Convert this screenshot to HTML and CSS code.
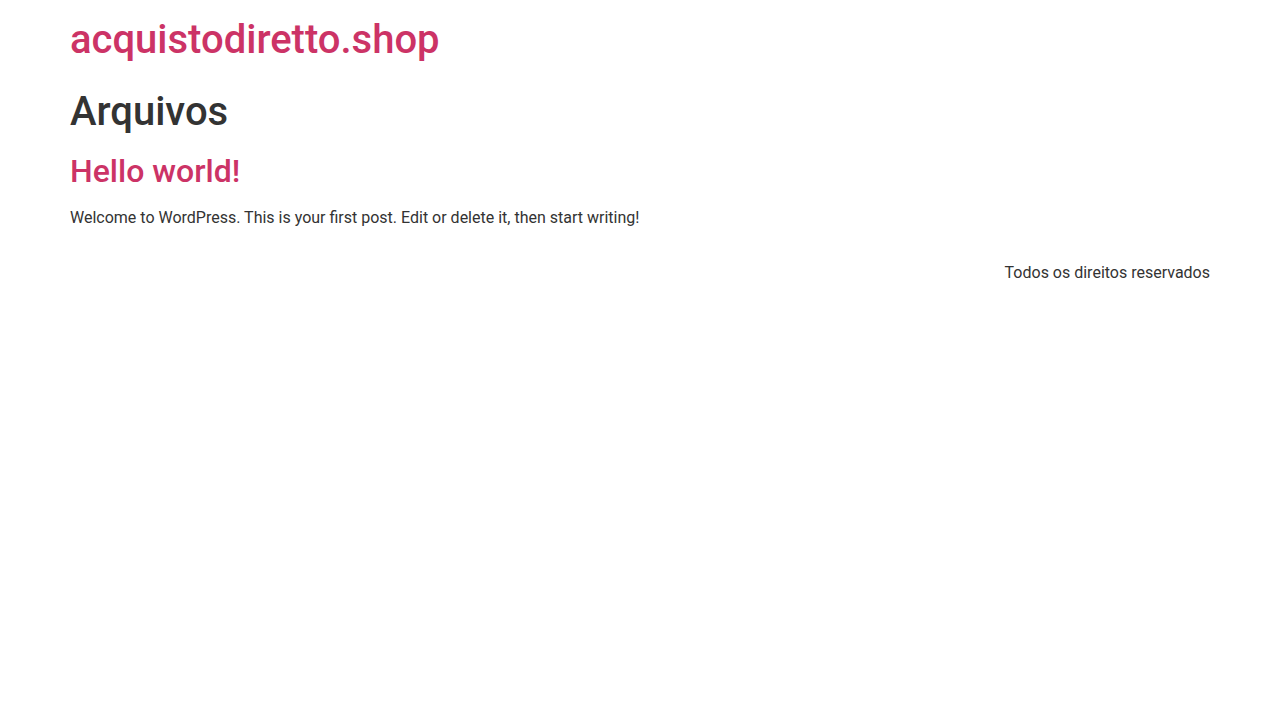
FILE: index.html
```html
<!DOCTYPE html>
<html lang="pt-BR">
<head>
<meta charset="utf-8">
<title>Arquivos – acquistodiretto.shop</title>
<link rel="stylesheet" href="styles.css">
</head>
<body>
<header class="site-header">
  <div class="site-branding">
    <h1 class="site-title"><a href="#">acquistodiretto.shop</a></h1>
  </div>
</header>
<main class="site-main">
  <div class="page-header">
    <h1 class="entry-title">Arquivos</h1>
  </div>
  <div class="page-content">
    <article class="post">
      <h2 class="post-title"><a href="#">Hello world!</a></h2>
      <p>Welcome to WordPress. This is your first post. Edit or delete it, then start writing!</p>
    </article>
  </div>
</main>
<footer class="site-footer">
  <div class="footer-inner">
    <p>Todos os direitos reservados</p>
  </div>
</footer>
</body>
</html>
```
FILE: styles.css
```css
html, body {
  margin: 0;
  padding: 0;
  background: #fff;
}
body {
  font-family: Roboto, "Liberation Sans", sans-serif;
  font-size: 16px;
  line-height: 1.5;
  color: #333;
}
a {
  color: #c36;
  text-decoration: none;
}
h1, h2 {
  font-weight: 500;
  line-height: 1.2;
  margin: 0;
}
.site-header,
.site-main,
.site-footer {
  max-width: 1140px;
  margin: 0 auto;
}
.site-header {
  padding: 16px 0;
}
.site-title {
  font-size: 40px;
}
.page-header {
  padding-top: 8px;
}
.entry-title {
  font-size: 40px;
  margin-bottom: 8px;
}
.post-title {
  font-size: 32px;
  margin-top: 16px;
  margin-bottom: 8px;
}
.post p {
  margin: 16px 0 0;
}
.site-footer {
  padding-top: 31px;
}
.footer-inner {
  display: flex;
  justify-content: flex-end;
}
.footer-inner p {
  margin: 0;
}
```
